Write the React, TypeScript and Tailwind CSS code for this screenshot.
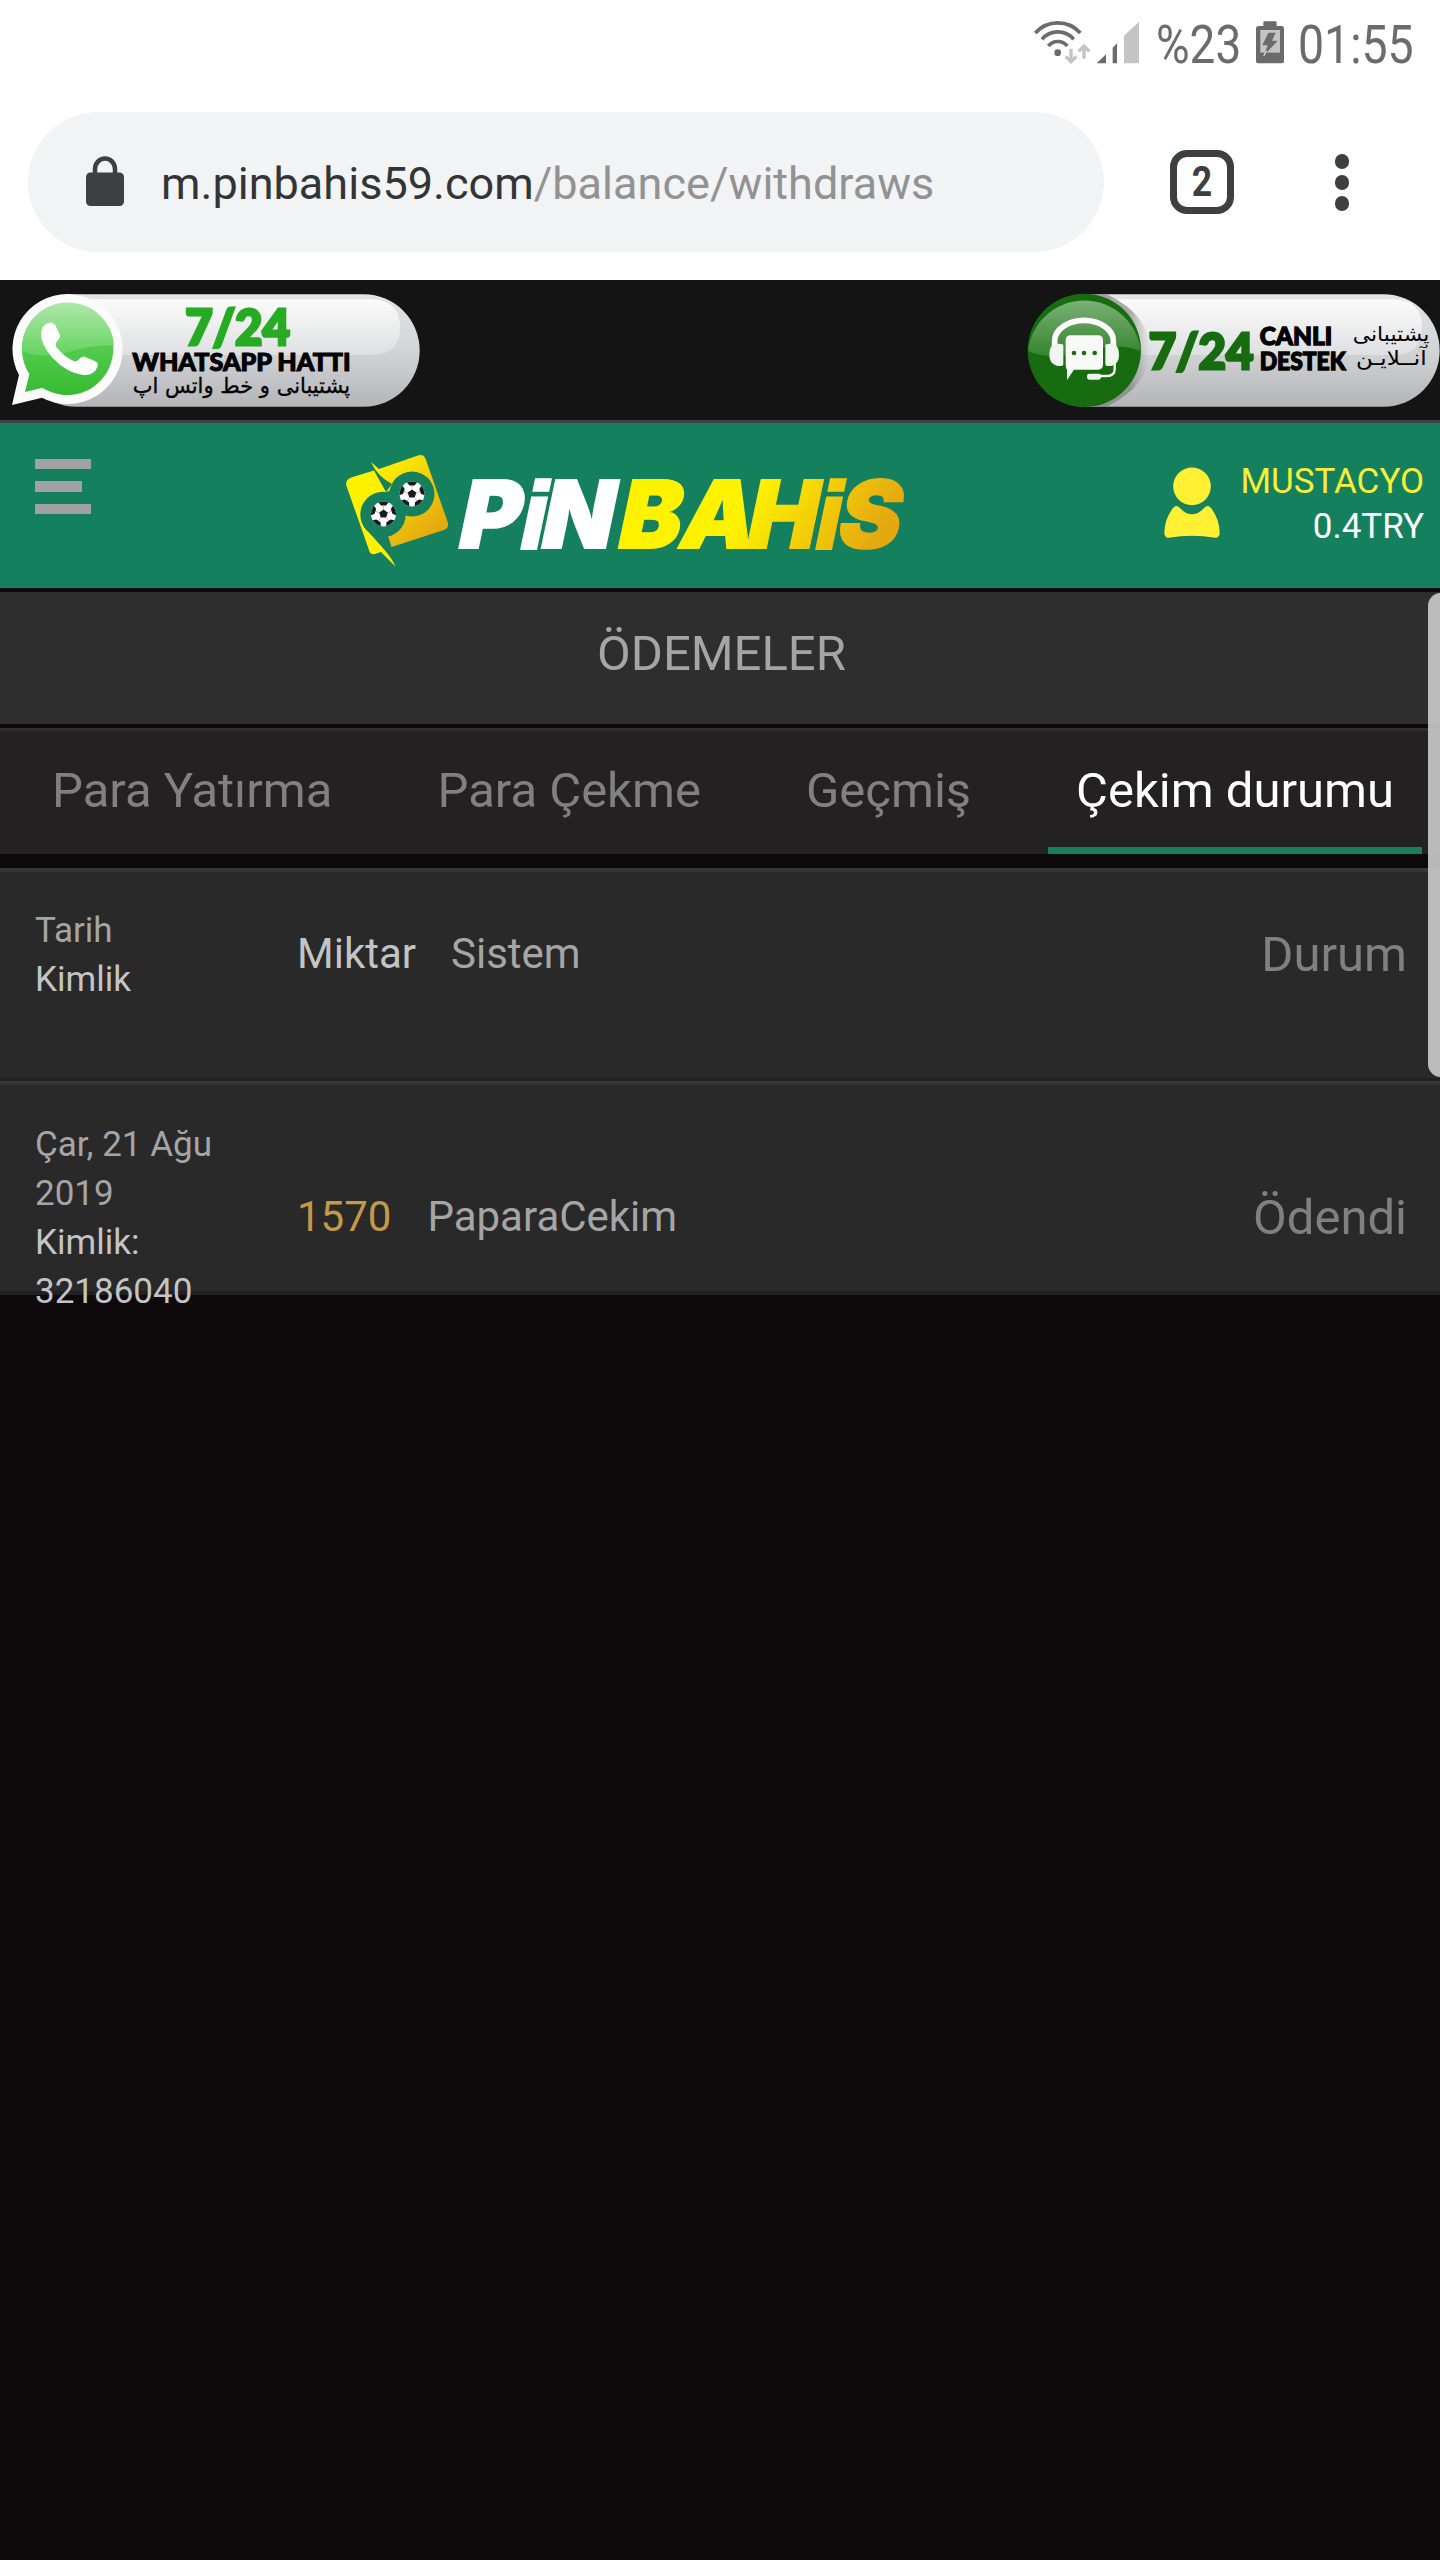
const tabs = ["Para Yatırma", "Para Çekme", "Geçmiş", "Çekim durumu"];

const StatusBar = () => {
  return (
    <div className="h-[90px] flex items-start text-[#6b6b6b] text-[54px] leading-[63px] pl-[1030px] pt-[13px]">
      <svg className="mt-[5px] shrink-0" width="112" height="50" viewBox="90 54 336 150">
        <g fill="none" stroke="#6b6b6b" strokeWidth="11">
          <path d="M106 99A90 90 0 0 1 241 99" />
          <path d="M126 118A62 62 0 0 1 221 118" />
          <path d="M145 138A37 37 0 0 1 202 138" />
        </g>
        <circle cx="173" cy="158" r="10" fill="#6b6b6b" />
        <g fill="none" stroke="#c4c4c4" strokeWidth="10">
          <path d="M213 146V184M197 169L213 185L229 169" />
          <path d="M252 176V138M236 154L252 138L268 154" />
        </g>
        <path d="M290 190L318 163V190ZM338 143L351 130V190H338Z" fill="#6b6b6b" />
        <path d="M372 107L417 65V190H372Z" fill="#c4c4c4" />
      </svg>
      <span className="w-[96px] ml-[14px]">
        <span className="inline-block origin-left scale-x-[0.85]">%23</span>
      </span>
      <svg className="mt-[5px] shrink-0" width="36" height="50" viewBox="756 54 108 150">
        <path d="M776 78H790V68Q790 64 794 64H826Q830 64 830 68V78H844Q852 78 852 86V184Q852 190 846 190H774Q768 190 768 184V86Q768 78 776 78Z" fill="#6b6b6b" />
        <path d="M781 90H840V158H781Z" fill="#c4c4c4" />
        <path d="M805 98H827L816 122H833L791 168L803 136H787Z" fill="#6b6b6b" />
        <path d="M791 168L800 152" stroke="#fff" strokeWidth="3" />
      </svg>
      <span className="ml-[10px] inline-block origin-left scale-x-[0.86]">01:55</span>
    </div>
  );
};

const AddressBar = () => {
  return (
    <div className="h-[190px] flex items-start pl-[28px] pt-[22px]">
      <div className="w-[1076px] h-[140px] rounded-full bg-[#f1f3f5] flex items-center pl-[58px]">
        <svg width="38" height="50" viewBox="0 0 38 50" className="-mt-[3px]">
          <path d="M9 20V13A10 10.5 0 0 1 29 13V20" fill="none" stroke="#3c4043" strokeWidth="4.5" />
          <rect y="16.500" width="38" height="33.500" rx="4.500" fill="#3c4043" />
        </svg>
        <p className="ml-[37px] mt-[3px] text-[45px] tracking-[0.03px] text-[#333435] whitespace-nowrap">
          m.pinbahis59.com<span className="text-[#929292]">/balance/withdraws</span>
        </p>
      </div>
      <div className="ml-[66px] mt-[38px] size-16 border-[7px] border-[#3c4043] rounded-[17px] flex items-center justify-center">
        <span className="text-[42px] leading-none font-bold text-[#3c4043] scale-x-[0.85]">2</span>
      </div>
      <div className="ml-[100.500px] mt-[42px] flex flex-col gap-[6.500px]">
        {[1, 2, 3].map((dot) => (
          <div key={dot} className="size-[14.500px] rounded-full bg-[#3c4043]" />
        ))}
      </div>
    </div>
  );
};

const WhatsappBadge = () => {
  return (
    <svg width="440" height="140" viewBox="0 15 1320 420">
      <defs>
        <linearGradient id="pill" x1="0" y1="0" x2="0" y2="1">
          <stop offset="0" stopColor="#e4e4e5" />
          <stop offset="0.5" stopColor="#d3d4d6" />
          <stop offset="1" stopColor="#b4b5b8" />
        </linearGradient>
        <linearGradient id="shine" x1="0" y1="0" x2="0" y2="1">
          <stop offset="0" stopColor="#fbfbfb" />
          <stop offset="1" stopColor="#dedfe0" />
        </linearGradient>
        <linearGradient id="waTop" x1="0" y1="0" x2="0" y2="1">
          <stop offset="0" stopColor="#aee8a9" />
          <stop offset="1" stopColor="#66d360" />
        </linearGradient>
        <linearGradient id="waFill" x1="0" y1="0" x2="0" y2="1">
          <stop offset="0.5" stopColor="#52cb4d" />
          <stop offset="1" stopColor="#36bb31" />
        </linearGradient>
      </defs>
      <rect x="60" y="58" width="1199" height="337" rx="168" fill="url(#pill)" />
      <path d="M220 73H1110Q1200 73 1200 157Q1200 240 1110 240H220Z" fill="url(#shine)" />
      <path d="M204 57A165 165 0 1 1 126 368L36 390L57 300A165 165 0 0 1 204 57Z" fill="#fbfbfb" />
      <path d="M204 84A138 138 0 1 1 127 338L75 351L88 297A138 138 0 0 1 204 84Z" fill="url(#waFill)" />
      <path d="M66 228A138 138 0 0 1 342 213Q280 208 215 228Q130 255 66 228Z" fill="url(#waTop)" />
      <path
        d="M146 143Q160 140 166 151L179 178Q184 188 168 203Q164 210 172 220Q193 246 221 258Q228 261 235 254Q247 241 256 246L286 259Q296 264 293 274Q284 302 250 300Q200 294 158 249Q122 207 123 176Q125 150 146 143Z"
        fill="#fff"
      />
      <text x="556" y="210" textLength="314" lengthAdjust="spacingAndGlyphs" fontSize="149" className="font-[Lato] font-black" fill="#26ab22" stroke="#26ab22" strokeWidth="9">
        7/24
      </text>
      <text x="397" y="289" textLength="655" lengthAdjust="spacingAndGlyphs" fontSize="72" className="font-[Lato] font-black" stroke="#000" strokeWidth="3">
        WHATSAPP HATTI
      </text>
      <text x="398" y="354" direction="rtl" textAnchor="end" textLength="652" lengthAdjust="spacingAndGlyphs" fontSize="64" className="font-['DejaVu_Sans']" stroke="#000" strokeWidth="1">
        پشتیبانی و خط واتس اپ
      </text>
    </svg>
  );
};

const SupportBadge = () => {
  return (
    <svg width="430" height="140" viewBox="0 15 1290 420">
      <defs>
        <linearGradient id="supportTop" x1="0" y1="0" x2="0" y2="1">
          <stop offset="0" stopColor="#7bb077" />
          <stop offset="1" stopColor="#33842d" />
        </linearGradient>
        <linearGradient id="shadow" x1="0" y1="0" x2="1" y2="0">
          <stop offset="0.7" stopColor="#777" stopOpacity="0.6" />
          <stop offset="1" stopColor="#999" stopOpacity="0" />
        </linearGradient>
      </defs>
      <rect x="60" y="58" width="1229" height="337" rx="168" fill="url(#pill)" />
      <path d="M220 73H1150Q1236 73 1236 157Q1236 240 1150 240H220Z" fill="url(#shine)" />
      <path d="M222 58H290Q420 120 420 226T290 395H222Z" fill="url(#shadow)" />
      <circle cx="223" cy="226" r="170" fill="#176c10" />
      <path d="M54 228A170 170 0 0 1 392 228Q330 205 250 222Q130 262 54 228Z" fill="url(#supportTop)" />
      <g fill="none" stroke="#fff">
        <path d="M134 212V198A88 62 0 0 1 310 198V212" strokeWidth="17" />
        <path d="M314 262V282Q314 303 290 303H262" strokeWidth="7" />
      </g>
      <path d="M134 207Q160 204 160 212V268Q160 276 140 272Q118 266 118 240Q118 212 134 207Z" fill="#f1f5f0" />
      <path d="M310 207Q286 204 286 212V268Q286 276 306 272Q327 266 327 240Q327 212 310 207Z" fill="#f1f5f0" />
      <rect x="231" y="296" width="42" height="18" rx="7" fill="#f1f5f0" />
      <path d="M182 181H264Q279 181 279 196V268Q279 284 264 284H192L171 315V284Q167 280 167 268V196Q167 181 182 181Z" fill="#f7f9f7" />
      <g fill="#176c10">
        <circle cx="192" cy="234" r="7" />
        <circle cx="222" cy="234" r="7" />
        <circle cx="254" cy="234" r="7" />
      </g>
      <text x="416" y="282" textLength="314" lengthAdjust="spacingAndGlyphs" fontSize="151" className="font-[Lato] font-black" fill="#176c10" stroke="#176c10" strokeWidth="9">
        7/24
      </text>
      <text x="749" y="211" textLength="218" lengthAdjust="spacingAndGlyphs" fontSize="74" className="font-[Lato] font-black" stroke="#000" strokeWidth="4">
        CANLI
      </text>
      <text x="749" y="286" textLength="258" lengthAdjust="spacingAndGlyphs" fontSize="74" className="font-[Lato] font-black" stroke="#000" strokeWidth="4">
        DESTEK
      </text>
      <text x="1028" y="198" direction="rtl" textAnchor="end" textLength="230" lengthAdjust="spacingAndGlyphs" fontSize="60" className="font-['DejaVu_Sans']">
        پشتیبانی
      </text>
      <text x="1038" y="271" direction="rtl" textAnchor="end" textLength="212" lengthAdjust="spacingAndGlyphs" fontSize="60" className="font-['DejaVu_Sans']">
        آنــلایـن
      </text>
    </svg>
  );
};

const Football = ({ x, y }: { x: number; y: number }) => {
  return (
    <g transform={`translate(${x} ${y})`}>
      <circle r="12.500" fill="#fff" />
      <g fill="#1a1a1a">
        <path d="M0 -4.500L4.300 -1.400L2.700 3.600H-2.700L-4.300 -1.400Z" />
        {[0, 72, 144, 216, 288].map((angle) => (
          <path key={angle} d="M-5 -11.500Q0 -13.500 5 -11.500L2.500 -8.500H-2.500Z" transform={`rotate(${angle})`} />
        ))}
      </g>
      <g stroke="#999" strokeWidth="0.600">
        {[0, 72, 144, 216, 288].map((angle) => (
          <path key={angle} d="M0 -4.500V-8.500" transform={`rotate(${angle})`} />
        ))}
      </g>
    </g>
  );
};

const Logo = () => {
  return (
    <svg width="600" height="158" viewBox="0 0 600 158">
      <defs>
        <linearGradient id="gold" gradientUnits="userSpaceOnUse" x1="55" y1="40" x2="110" y2="105">
          <stop offset="0" stopColor="#fff000" />
          <stop offset="1" stopColor="#e5a910" />
        </linearGradient>
        <linearGradient id="wordmark" gradientUnits="userSpaceOnUse" x1="420" y1="-50" x2="550" y2="0">
          <stop offset="0" stopColor="#fff200" />
          <stop offset="1" stopColor="#e5a910" />
        </linearGradient>
      </defs>
      <path d="M51 32L59 39L98 25.500Q104 23.500 106 30L128 93Q129 98 124 100L71.500 117L67.500 104L60 70L72 54Q57 46 51 32Z" fill="url(#gold)" />
      <path d="M54 40.500L31 47.500Q25 50 26.500 56L49 120Q50 125 55 124L61 122L75.500 136.500Q72 128 62 117L44 97L66 62Z" fill="#fff000" />
      <g fill="#15805e">
        <circle cx="92" cy="64" r="22.500" />
        <circle cx="63" cy="84.500" r="22.700" />
        <path d="M42 93L67.500 118V104L84 92L72 60L66 62Z" />
      </g>
      <Football x={63.500} y={84} />
      <Football x={92} y={64} />
      <g transform="translate(0 117.800) skewX(-11.800)">
        <text x="135 196 217.500 294.500 356 423 491 514" fontSize="93.500" className="font-[Inter] font-black" fill="#fff" stroke="#fff" strokeWidth="2">
          P<tspan className="font-['Liberation_Sans']" strokeWidth="4">i</tspan>N
          <tspan fill="url(#wordmark)" stroke="url(#wordmark)">BAH<tspan className="font-['Liberation_Sans']" strokeWidth="4">i</tspan>S</tspan>
        </text>
      </g>
    </svg>
  );
};

const SiteHeader = () => {
  return (
    <div className="h-[168px] border-t-[3px] border-[#38434c] bg-[#15805e] flex items-start pr-[16px]">
      <div className="ml-[35px] mt-[36px] w-[56px] flex flex-col gap-[12px]">
        <div className="h-[10px] w-[56px] bg-[#a1a1a1]" />
        <div className="h-[11px] w-[47px] bg-[#a1a1a1]" />
        <div className="h-[10px] w-[56px] bg-[#a1a1a1]" />
      </div>
      <div className="ml-[229px] mt-[7px]">
        <Logo />
      </div>
      <div className="ml-auto flex mt-[36px]">
        <svg width="56" height="72" viewBox="0 0 168 216" className="mt-[8px] mr-[20px]">
          <circle cx="84" cy="58" r="56.500" fill="#fff033" />
          <path d="M37 117Q44 118 50 125Q66 142 84 142T118 125Q124 118 131 117Q137 117 143 125Q167 160 167 198Q166 213 153 212Q118 206 84 206T15 212Q2 213 1 198Q1 160 25 125Q31 117 37 117Z" fill="#fff033" />
        </svg>
        <div className="text-[35px] leading-[45px] text-right">
          <p className="text-[#f5ee3a]">MUSTACYO</p>
          <p className="text-white">0.4TRY</p>
        </div>
      </div>
    </div>
  );
};

const App = () => {
  return (
    <div className="relative w-[1440px] h-[2560px] overflow-hidden bg-[#0e0a0b] font-[Roboto,sans-serif]">
      <div className="bg-white">
        <StatusBar />
        <AddressBar />
      </div>
      <div className="h-[140px] bg-[#141414] flex justify-between">
        <WhatsappBadge />
        <SupportBadge />
      </div>
      <SiteHeader />

      {/* Page title */}
      <div className="mt-[4px] h-[132px] bg-[#2e2e2e] text-[#a5a5a5] text-[49px] leading-[57px] text-center pt-[33px] pl-[3px]">
        ÖDEMELER
      </div>

      {/* Tabs */}
      <div className="mt-[4px] h-[126px] bg-[#232122] border-t-[3px] border-[#2f2e2f] flex gap-[49px] pl-[24px] text-[49px] leading-[57px] whitespace-nowrap">
        {tabs.map((tab) => (
          <div
            key={tab}
            className={`px-[28px] pt-[31px] ${
              tab === "Çekim durumu"
                ? "text-white border-b-[7px] border-[#187f5f]"
                : "text-[#808080]"
            }`}
          >
            {tab}
          </div>
        ))}
      </div>

      {/* Table head */}
      <div className="mt-[14px] h-[213px] bg-[#292929] border-t-4 border-b-[3px] border-t-[#353535] border-b-[#212121] flex items-start pl-[35px] pr-[33px]">
        <div className="w-[262px] pt-[34px] text-[35px] leading-[49px]">
          <p className="text-[#a5a5a5]">Tarih</p>
          <p className="text-[#c4c4c4]">Kimlik</p>
        </div>
        <div className="pt-[57px] flex gap-[35px] text-[42px] leading-[49px]">
          <p className="text-[#c4c4c4]">Miktar</p>
          <p className="text-[#a5a5a5]">Sistem</p>
        </div>
        <p className="ml-auto pt-[54px] text-[49px] leading-[57px] text-[#808080]">Durum</p>
      </div>

      {/* Withdraw row, the id runs over the bottom edge */}
      <div className="h-[214px] bg-[#292929] border-t-4 border-b-4 border-t-[#353535] border-b-[#212021] flex items-start pl-[35px] pr-[33px]">
        <div className="w-[262px] pt-[35px] text-[35px] leading-[49px]">
          <p className="w-[200px] text-[#a5a5a5]">Çar, 21 Ağu 2019</p>
          <p className="w-[200px] text-[#c4c4c4]">Kimlik: 32186040</p>
        </div>
        <div className="pt-[107px] flex gap-[36px] text-[42px] leading-[49px]">
          <p className="text-[#c4994a]">1570</p>
          <p className="text-[#a5a5a5]">PaparaCekim</p>
        </div>
        <p className="ml-auto pt-[104px] text-[49px] leading-[57px] text-[#808080]">Ödendi</p>
      </div>

      {/* Scrollbar */}
      <div className="absolute left-[1427.500px] top-[593px] w-[26px] h-[484px] rounded-[13px] bg-[#c8c8c8]/92" />
    </div>
  );
};

export default App;
